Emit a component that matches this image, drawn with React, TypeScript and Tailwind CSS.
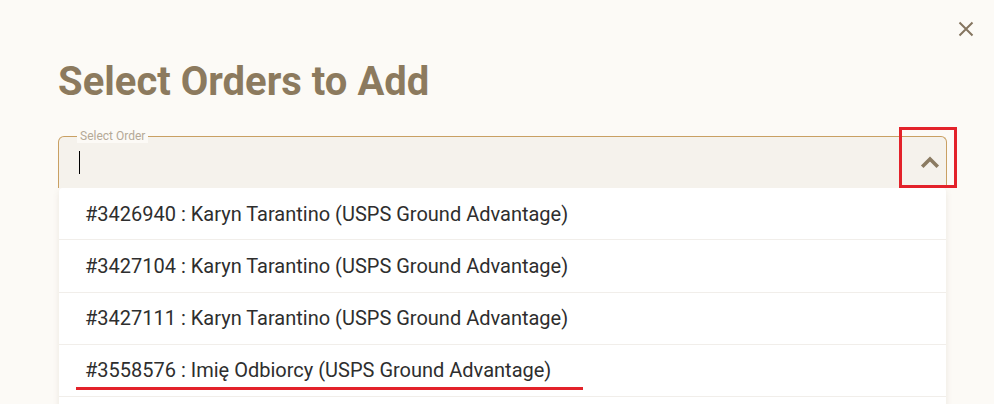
import React from "react";

const orders = [
  { id: "3426940", name: "Karyn Tarantino", service: "USPS Ground Advantage" },
  { id: "3427104", name: "Karyn Tarantino", service: "USPS Ground Advantage" },
  { id: "3427111", name: "Karyn Tarantino", service: "USPS Ground Advantage" },
  { id: "3558576", name: "Imię Odbiorcy", service: "USPS Ground Advantage", marked: true },
];

export default function App() {
  return (
    <div
      className="relative w-[994px] h-[404px] overflow-hidden bg-[#fcfaf6]"
      style={{ fontFamily: "Roboto, 'Liberation Sans', sans-serif" }}
    >
      {/* close */}
      <button className="absolute right-[19px] top-[20px] w-[18px] h-[18px] flex items-center justify-center text-[#857560]">
        <svg width="16" height="16" viewBox="0 0 16 16" fill="none" stroke="currentColor" strokeWidth="2">
          <path d="M1.5 1.5 L14.5 14.5 M14.5 1.5 L1.5 14.5" />
        </svg>
      </button>

      <div className="pl-[58px] pr-[47px] pt-[59px]">
        <h1 className="text-[40px] leading-[46px] font-bold text-[#8c7a5e]">Select Orders to Add</h1>

        <div className="relative mt-[31px]">
          {/* input with notched outline */}
          <div className="relative h-[52px] flex items-center justify-between pl-[20px] pr-[6px] bg-[#f5f2ec] rounded-t-[6px] border border-b-0 border-[#c9a063]">
            <span className="absolute left-[18px] -top-[8px] px-[3px] bg-[#fcfaf6] text-[12px] leading-[14px] text-[#b5a997]">
              Select Order
            </span>
            <div className="w-px h-[23px] bg-black" />
            <div className="w-[20px] h-[20px] flex items-center justify-center text-[#8b7b62] mb-[2px]">
              <svg width="20" height="20" viewBox="0 0 20 20" fill="none" stroke="currentColor" strokeWidth="3.6" strokeLinecap="square">
                <path d="M3.5 13.5 L10 7 L16.5 13.5" />
              </svg>
            </div>
          </div>
          {/* annotation box */}
          <div className="absolute right-[-10px] top-[-9px] w-[58px] h-[61px] border-[3px] border-[#e3222a]" />

          {/* dropdown list */}
          <div className="flex flex-col mx-px bg-white rounded-t-[4px] shadow-[0_2px_6px_rgba(120,100,70,0.12)]">
            {orders.map((o) => (
              <div
                key={o.id}
                className="relative h-[52.25px] flex items-center pl-[26px] border-b border-[#f1eeea] text-[20px] text-[#2e2e2e]"
              >
                #{o.id} : {o.name} ({o.service})
                {o.marked && (
                  <div className="absolute left-[17px] top-[42px] w-[507px] h-[3px] bg-[#e3222a]" />
                )}
              </div>
            ))}
            <div className="h-[20px]" />
          </div>
        </div>
      </div>
    </div>
  );
}
